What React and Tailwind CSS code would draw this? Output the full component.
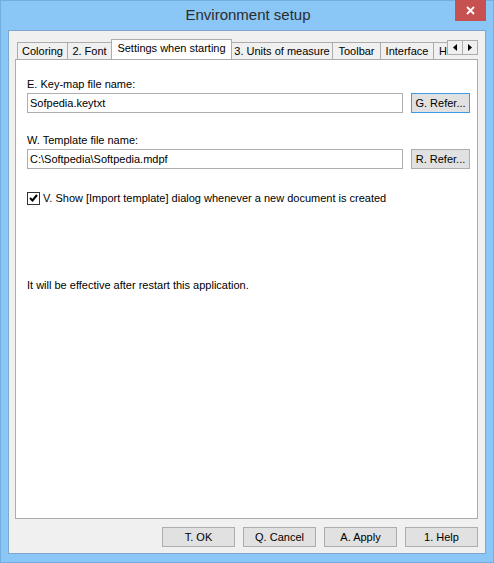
import React from 'react'

const ui = { fontFamily: '"Liberation Sans", Arial, sans-serif' }

function Tab({ label, width, active, first, left }) {
  if (active) {
    return (
      <div
        className={`relative z-10 h-[21px] shrink-0 -mb-px bg-white border border-b-0 border-[#acacac] flex items-center justify-center text-[11px] text-black whitespace-nowrap ${first ? '' : '-ml-px'}`}
        style={{ width }}
      >
        <span className="-mt-[3px]">{label}</span>
      </div>
    )
  }
  return (
    <div
      className={`h-[17px] shrink-0 bg-[#f0f0f0] border border-b-0 border-[#acacac] flex items-center text-[11px] text-black whitespace-nowrap overflow-hidden ${left ? 'pl-[5px]' : 'justify-center'} ${first ? '' : '-ml-px'}`}
      style={{ width }}
    >
      {label}
    </div>
  )
}

function Btn({ children, focused, className = '' }) {
  return (
    <div
      className={`h-[20px] bg-[#e1e1e1] border flex items-center justify-center text-[11px] text-black ${focused ? 'border-[#3c9ce8]' : 'border-[#adadad]'} ${className}`}
    >
      {children}
    </div>
  )
}

function Field({ value }) {
  return (
    <div className="w-[376px] h-[20px] bg-white border border-[#adadad] flex items-center pl-[2px] text-[11px] text-black">
      {value}
    </div>
  )
}

export default function App() {
  return (
    <div className="w-[494px] h-[563px] bg-[#8ac6f6] flex flex-col px-[7px] pb-[8px] border border-[#74aee0]" style={ui}>
      {/* title bar */}
      <div className="relative h-[29px] flex items-center justify-center">
        <span className="text-[15px] text-[#2c2c2c] -mt-[1px] ml-[2px]">Environment setup</span>
        <div className="absolute right-[0px] -top-px w-[31px] h-[21px] bg-[#c75050] flex items-center justify-center">
          <svg width="9" height="9" viewBox="0 0 9 9">
            <path d="M1 1L8 8M8 1L1 8" stroke="white" strokeWidth="1.8" />
          </svg>
        </div>
      </div>

      {/* client area */}
      <div className="flex-1 bg-[#f0f0f0] border border-[#7ea8cf] flex flex-col pl-[6px] pr-[7px] pt-[8px]">
        {/* tab strip */}
        <div className="relative flex items-end h-[20px] pl-[2px]">
          <div className="flex items-end w-[430px] overflow-hidden">
            <Tab label="Coloring" width={51} first />
            <Tab label="2. Font" width={45} />
            <Tab label="Settings when starting" width={121} active />
            <Tab label="3. Units of measure" width={102} />
            <Tab label="Toolbar" width={49} />
            <Tab label="Interface" width={54} />
            <Tab label="Help" width={30} left />
          </div>
          <div className="absolute right-0 top-[1px] flex">
            <div className="w-[16px] h-[15px] bg-[#f0f0f0] border border-[#acacac] flex items-center justify-center">
              <svg width="4" height="7" viewBox="0 0 4 7"><path d="M4 0V7L0 3.5Z" fill="#000" /></svg>
            </div>
            <div className="w-[16px] h-[15px] -ml-px bg-[#f0f0f0] border border-[#acacac] flex items-center justify-center">
              <svg width="4" height="7" viewBox="0 0 4 7"><path d="M0 0V7L4 3.5Z" fill="#000" /></svg>
            </div>
          </div>
        </div>

        {/* tab page */}
        <div className="h-[460px] bg-white border border-[#acacac] pl-[11px] pt-[17px] text-[11px] text-black">
          <div className="leading-[14px]">E. Key-map file name:</div>
          <div className="flex items-center gap-[8px] mt-[2px]">
            <Field value="Sofpedia.keytxt" />
            <Btn focused className="w-[59px]">G. Refer...</Btn>
          </div>

          <div className="leading-[14px] mt-[20px]">W. Template file name:</div>
          <div className="flex items-center gap-[8px] mt-[2px]">
            <Field value="C:\Softpedia\Softpedia.mdpf" />
            <Btn className="w-[59px]">R. Refer...</Btn>
          </div>

          <div className="flex items-center gap-[3px] mt-[22px] h-[14px]">
            <div className="w-[13px] h-[13px] border border-[#333] bg-white flex items-center justify-center">
              <svg width="9" height="8" viewBox="0 0 9 8">
                <path d="M1 4L3.5 6.5L8 1" stroke="#000" strokeWidth="2" fill="none" />
              </svg>
            </div>
            <span>V. Show [Import template] dialog whenever a new document is created</span>
          </div>

          <div className="leading-[14px] mt-[73px]">It will be effective after restart this application.</div>
        </div>

        {/* buttons */}
        <div className="flex justify-end gap-[8px] mt-[8px]">
          <Btn className="w-[73px]">T. OK</Btn>
          <Btn className="w-[73px]">Q. Cancel</Btn>
          <Btn className="w-[73px]">A. Apply</Btn>
          <Btn className="w-[73px]">1. Help</Btn>
        </div>
      </div>
    </div>
  )
}
